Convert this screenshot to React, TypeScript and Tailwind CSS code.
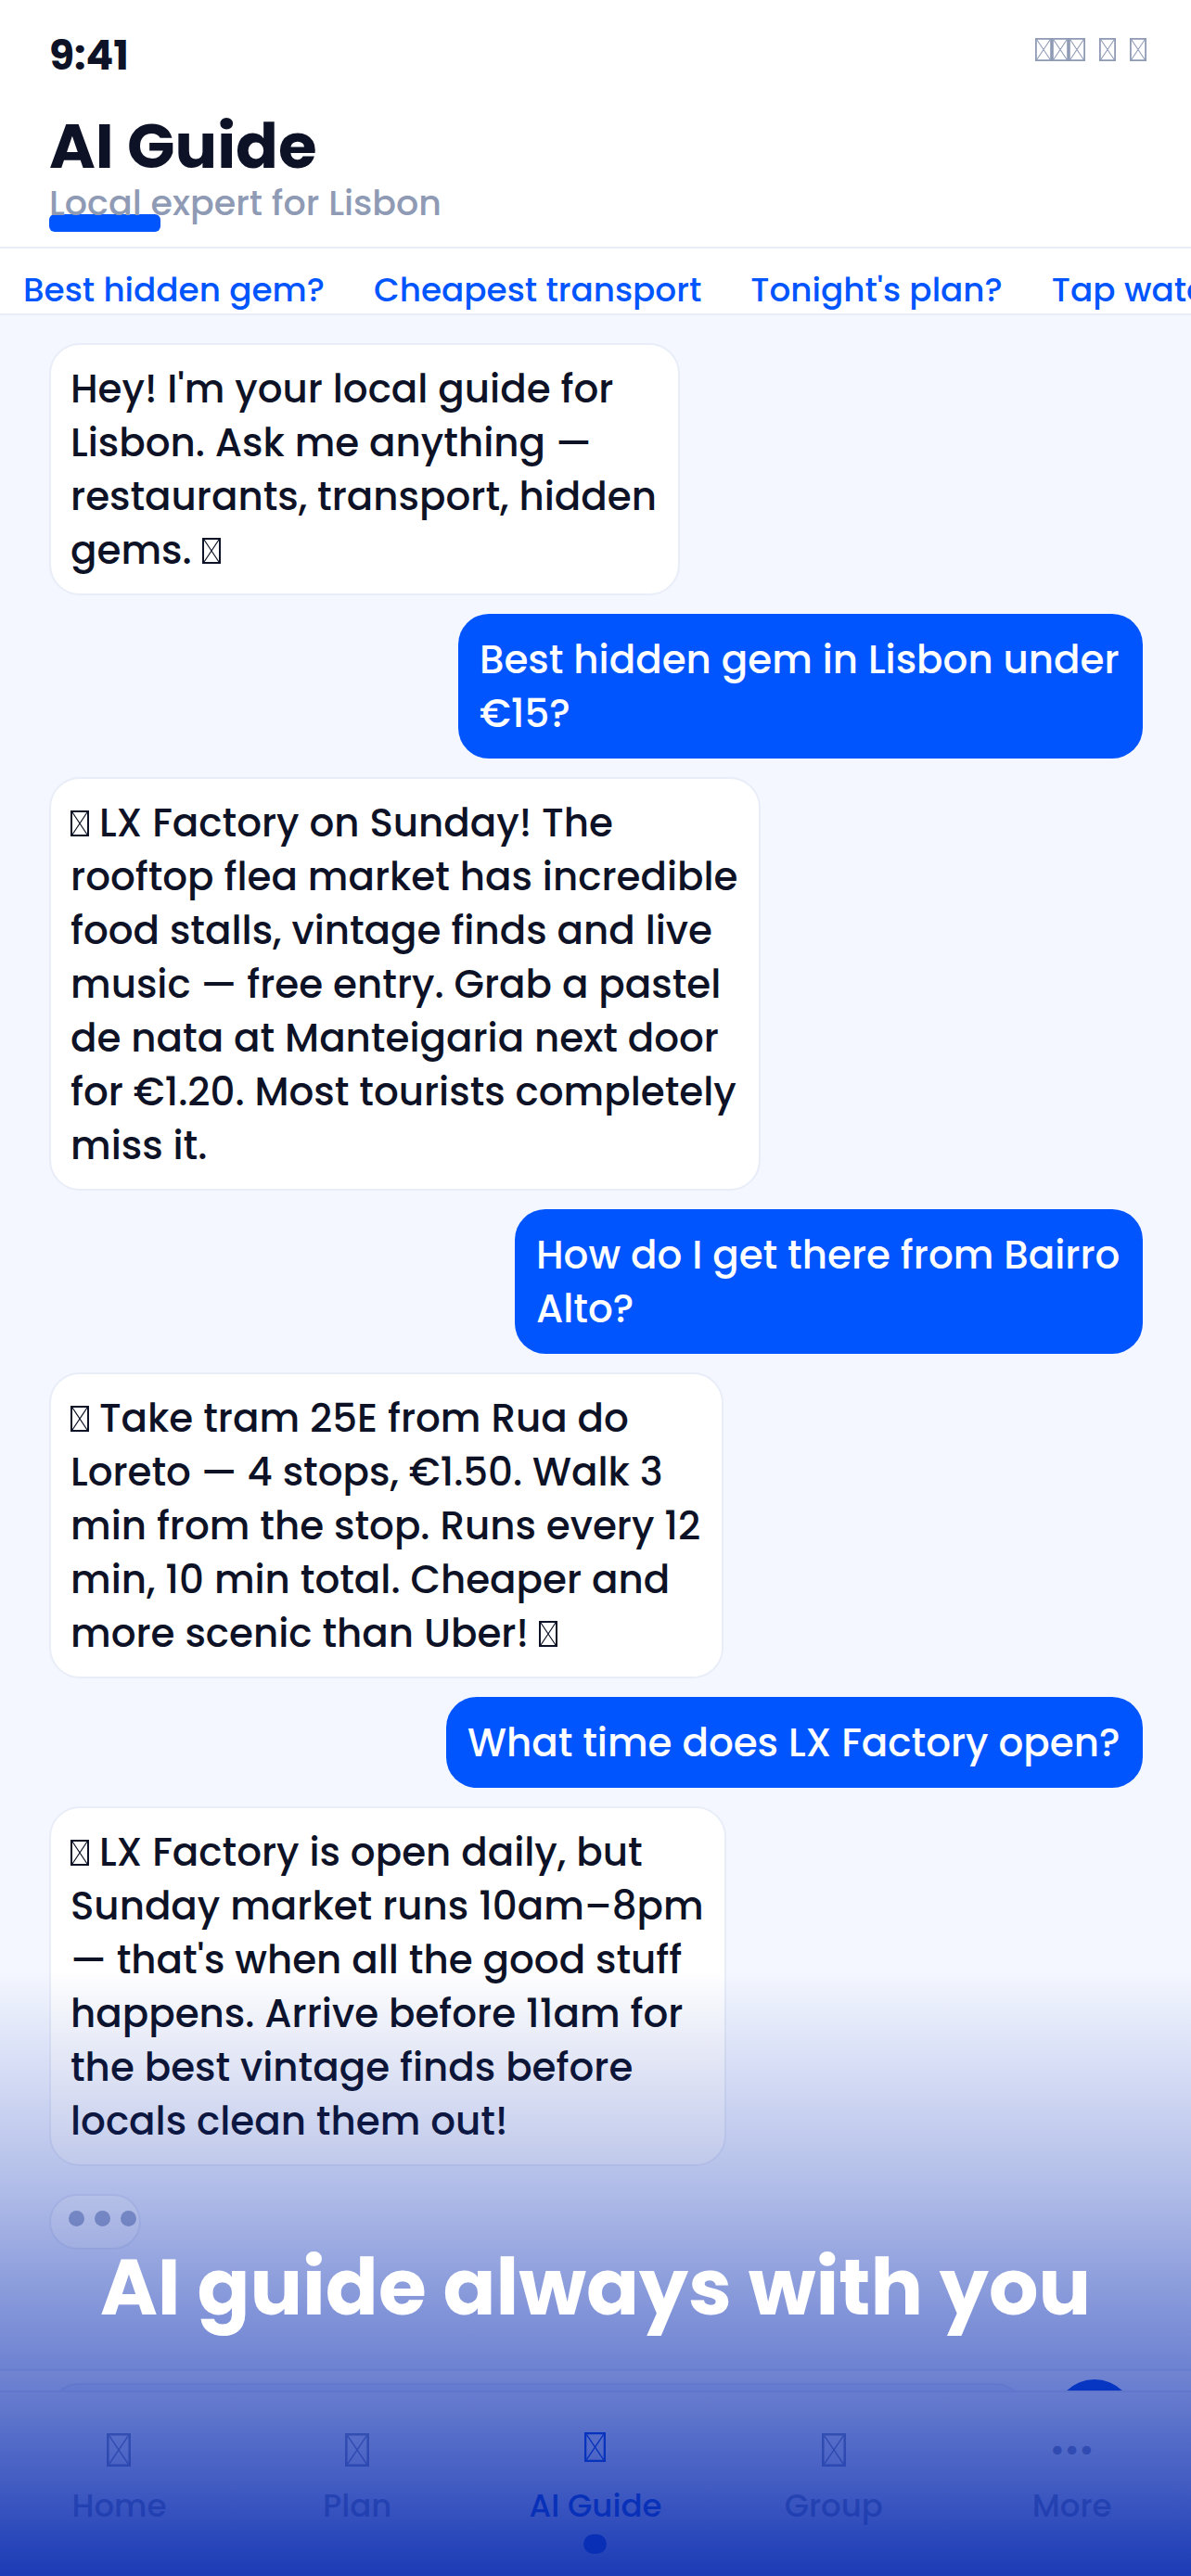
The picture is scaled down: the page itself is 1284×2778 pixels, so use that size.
import React from 'react';

const ink = 'text-[#0d1226]';

// missing-glyph box, the emoji in the picture come out as these
const Tofu: React.FC<{ className?: string }> = ({ className = 'h-[28px] w-[20px]' }) => (
  <svg viewBox="0 0 20 28" preserveAspectRatio="none" className={`inline-block align-baseline ${className}`} fill="none" stroke="currentColor">
    <rect x="1" y="1" width="18" height="26" strokeWidth="2" />
    <path d="M2 2 L18 26 M18 2 L2 26" strokeWidth="1.2" />
  </svg>
);

interface Message {
  from: 'ai' | 'me';
  width: string;
  lines: React.ReactNode[];
}

const messages: Message[] = [
  { from: 'ai', width: 'w-[680px]', lines: ["Hey! I'm your local guide for", 'Lisbon. Ask me anything —', 'restaurants, transport, hidden', <>gems. <Tofu /></>] },
  { from: 'me', width: 'w-[738px]', lines: ['Best hidden gem in Lisbon under', '€15?'] },
  { from: 'ai', width: 'w-[767px]', lines: [<><Tofu /> LX Factory on Sunday! The</>, 'rooftop flea market has incredible', 'food stalls, vintage finds and live', 'music — free entry. Grab a pastel', 'de nata at Manteigaria next door', 'for €1.20. Most tourists completely', 'miss it.'] },
  { from: 'me', width: 'w-[677px]', lines: ['How do I get there from Bairro', 'Alto?'] },
  { from: 'ai', width: 'w-[727px]', lines: [<><Tofu /> Take tram 25E from Rua do</>, 'Loreto — 4 stops, €1.50. Walk 3', 'min from the stop. Runs every 12', 'min, 10 min total. Cheaper and', <>more scenic than Uber! <Tofu /></>] },
  { from: 'me', width: 'w-[751px]', lines: ['What time does LX Factory open?'] },
  { from: 'ai', width: 'w-[730px]', lines: [<><Tofu /> LX Factory is open daily, but</>, 'Sunday market runs 10am–8pm', "— that's when all the good stuff", 'happens. Arrive before 11am for', 'the best vintage finds before', 'locals clean them out!'] },
];

const chips = ['Best hidden gem?', 'Cheapest transport', "Tonight's plan?", 'Tap water safe?'];

const tabs = [
  { label: 'Home' },
  { label: 'Plan' },
  { label: 'AI Guide', active: true },
  { label: 'Group' },
  { label: 'More', dots: true },
];

const Bubble: React.FC<{ message: Message }> = ({ message }) => {
  const mine = message.from === 'me';
  return (
    <div
      className={`${message.width} shrink-0 rounded-[33px] text-[42px] leading-[58px] font-medium whitespace-nowrap ${
        mine
          ? 'self-end bg-[#0055ff] px-[23px] pt-[21px] pb-[19px] text-white'
          : `self-start border-2 border-[#e8edf8] bg-white px-[21px] pt-[19px] pb-[17px] ${ink}`
      }`}
    >
      {message.lines.map((line, idx) => (
        <div key={idx}>{line}</div>
      ))}
    </div>
  );
};

export default function App() {
  return (
    <div className="relative flex h-[2778px] w-[1284px] flex-col overflow-hidden bg-[#f4f7ff] font-['Poppins','Inter',sans-serif]">
      {/* Header */}
      <header className="h-[266px] shrink-0 bg-white px-[53px] pt-[32px]">
        <div className="flex items-start justify-between">
          <span className={`text-[44px] font-bold leading-[56px] ${ink}`}>9:41</span>
          <div className="mt-[9px] mr-[-5px] flex gap-[15px] text-[#8f9ab5]">
            <div className="flex">
              <Tofu className="h-[25px] w-[18px]" />
              <Tofu className="h-[25px] w-[18px]" />
              <Tofu className="h-[25px] w-[18px]" />
            </div>
            <Tofu className="h-[25px] w-[18px]" />
            <Tofu className="h-[25px] w-[18px]" />
          </div>
        </div>
        <h1 className={`mt-[28px] text-[67.6px] font-bold leading-[84px] ${ink}`}>AI Guide</h1>
        <p className="-mt-[4px] text-[38px] leading-[46px] font-medium text-[#8f9ab5]">Local expert for Lisbon</p>
        <div className="-mt-[11px] h-[19px] w-[120px] rounded-[6px] bg-[#0055ff]" />
      </header>

      {/* Suggestions */}
      <div className="flex h-[74px] shrink-0 items-center gap-[53px] overflow-hidden border-y-2 border-[#e8edf8] bg-white pt-[19px] pl-[25px]">
        {chips.map(chip => (
          <span key={chip} className="shrink-0 text-[35.8px] font-medium whitespace-nowrap text-[#0055ff]">
            {chip}
          </span>
        ))}
      </div>

      {/* Chat */}
      <main className="flex min-h-0 flex-1 flex-col gap-[20px] overflow-hidden pt-[30px] pr-[52px] pl-[53px]">
        {messages.map((message, idx) => (
          <Bubble key={idx} message={message} />
        ))}
        <div className="mt-[10px] flex h-[60px] w-[99px] shrink-0 items-center gap-[11px] rounded-[30px] border-2 border-[#e8edf8] bg-white pb-[8px] pl-[19px]">
          <span className="h-[17px] w-[17px] shrink-0 rounded-full bg-[#a9b3cc]" />
          <span className="h-[17px] w-[17px] shrink-0 rounded-full bg-[#a9b3cc]" />
          <span className="h-[17px] w-[17px] shrink-0 rounded-full bg-[#a9b3cc]" />
        </div>
      </main>

      {/* Input */}
      <div className="flex h-[100px] shrink-0 items-start gap-[32px] border-t-2 border-[#e8edf8] bg-white pt-[9px] pr-[61px] pl-[53px]">
        <div className="mt-[4px] h-[76px] flex-1 rounded-[32px] border-2 border-[#e8edf8] bg-[#f4f7ff]" />
        <div className="h-[86px] w-[86px] shrink-0 rounded-full bg-[#0044dd]" />
      </div>

      {/* Tab bar */}
      <nav className="relative -mt-[77px] grid h-[200px] shrink-0 grid-cols-5 border-t-2 border-[#e8edf8] bg-white">
        {tabs.map(tab => (
          <div key={tab.label} className={`flex flex-col items-center pt-[40px] ${tab.active ? 'text-[#0044dd]' : 'text-[#8f9ab5]'}`}>
            <span className="flex h-[44px] items-center text-[38px] leading-[44px]">
              {tab.dots ? '•••' : tab.active ? <Tofu className="-mt-[6px] h-[32px] w-[23px]" /> : <Tofu className="h-[36px] w-[26px]" />}
            </span>
            <span className="mt-[16px] text-[34px] leading-[44px] font-medium">{tab.label}</span>
            {tab.active && <span className="mt-[9px] h-[21px] w-[25px] rounded-full bg-[#0044dd]" />}
          </div>
        ))}
      </nav>

      {/* Caption over a fade */}
      <div className="pointer-events-none absolute inset-x-0 bottom-0 flex h-[653px] flex-col items-center bg-[linear-gradient(to_bottom,rgba(10,44,176,0)_0%,rgba(10,44,176,0.27)_34%,rgba(10,44,176,0.564)_64.5%,rgba(10,44,176,0.93)_100%)] pt-[289px]">
        <p className="text-[84px] leading-[106px] font-bold text-white">AI guide always with you</p>
      </div>
    </div>
  );
}
